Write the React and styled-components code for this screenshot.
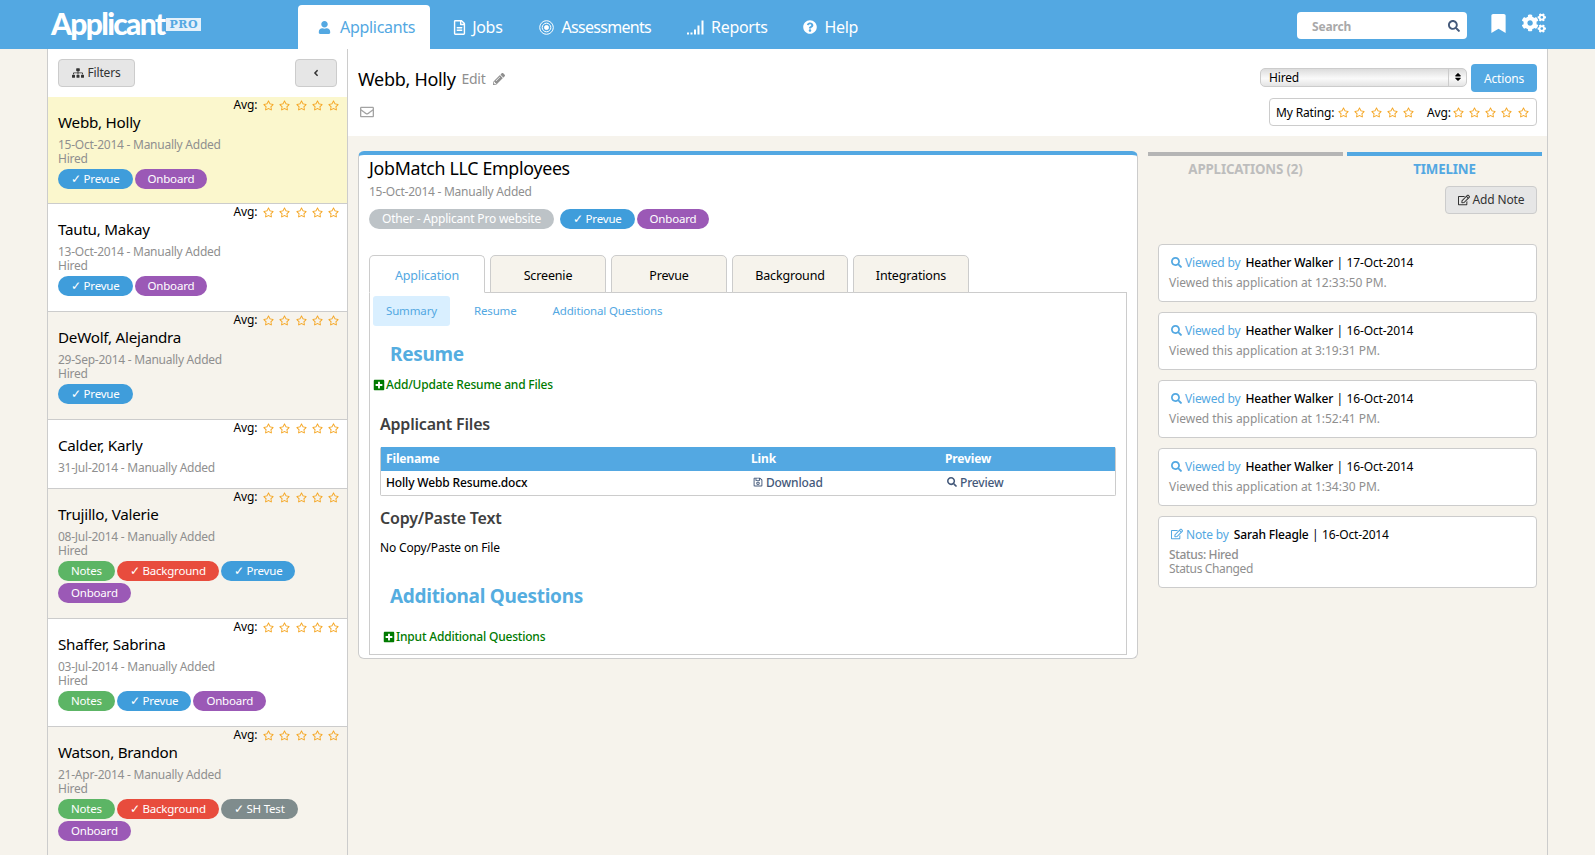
import styled, { createGlobalStyle } from 'styled-components';
import {
  FaUser, FaRegFileAlt, FaQuestionCircle, FaSearch, FaBookmark, FaCogs, FaSitemap, FaAngleLeft,
  FaRegEnvelope, FaPencilAlt, FaRegStar, FaRegEdit, FaPlusSquare, FaRegSave, FaSort,
} from 'react-icons/fa';

const blue = '#53a8e2';
const cream = '#f6f3ec';
const line = '#cccccc';
const grey = '#8f8f8f';

const GlobalStyle = createGlobalStyle`
  html, body {
    margin: 0;
    height: 100%;
    overflow: hidden;
    background: ${cream};
    font-family: "Noto Sans", "Open Sans", sans-serif;
    font-size: 12px;
    letter-spacing: -0.15px;
    color: #000;
  }
  * { box-sizing: border-box; }
`;

const Header = styled.header`
  height: 49px;
  background: ${blue};
  display: flex;
  align-items: flex-end;
  padding-left: 51px;
  color: #fff;
`;

const Logo = styled.div`
  width: 247px;
  height: 49px;
  display: flex;
  align-items: center;
  font-family: "Lato", sans-serif;
  font-weight: 900;
  font-size: 30px;
  letter-spacing: -1.7px;
  padding-bottom: 3px;
`;

const ProBadge = styled.span`
  background: #e4f1fb;
  color: ${blue};
  font-family: "DejaVu Serif", serif;
  font-size: 11px;
  font-weight: 700;
  letter-spacing: 0.6px;
  line-height: 13px;
  padding: 0 3px;
  margin-left: 2px;
  margin-top: 2px;
`;

const NavTab = styled.a`
  height: ${(p) => (p.$active ? '44px' : '49px')};
  padding: ${(p) => (p.$active ? '0 15px 0 20px' : '0')};
  margin-right: ${(p) => p.$gap}px;
  display: flex;
  align-items: center;
  gap: ${(p) => p.$iconGap}px;
  font-size: 16px;
  letter-spacing: ${(p) => (p.$tight ? '-0.7px' : '-0.3px')};
  background: ${(p) => (p.$active ? '#fff' : 'transparent')};
  color: ${(p) => (p.$active ? blue : '#fff')};
  border-radius: 4px 4px 0 0;
  padding-top: ${(p) => (p.$active ? '0' : '5px')};
`;

const HeaderRight = styled.div`
  margin-left: auto;
  height: 49px;
  display: flex;
  align-items: center;
  padding-right: 49px;
  padding-bottom: 3px;
`;

const SearchBox = styled.div`
  width: 170px;
  height: 27px;
  margin-top: 5px;
  background: #fff;
  border-radius: 4px;
  display: flex;
  align-items: center;
  justify-content: space-between;
  padding: 1px 7px 0 15px;
  color: #a9a9a9;
  font-weight: 700;
  font-size: 12px;
  margin-right: 22px;
  svg { color: #44597a; }
`;

const Shell = styled.div`
  margin: 0 47px;
  height: 806px;
  display: flex;
  border-left: 1px solid ${line};
  border-right: 1px solid ${line};
  overflow: hidden;
`;

const Sidebar = styled.aside`
  width: 300px;
  flex: none;
  border-right: 1px solid ${line};
  background: #fff;
  display: flex;
  flex-direction: column;
`;

const SidebarTop = styled.div`
  height: 48px;
  flex: none;
  padding: 10px 10px 0 10px;
  display: flex;
  justify-content: space-between;
`;

const GreyButton = styled.button`
  height: 28px;
  width: ${(p) => p.$width}px;
  font: inherit;
  letter-spacing: inherit;
  line-height: 24px;
  color: #333;
  background: #e6e6e6;
  border: 1px solid ${line};
  border-radius: 4px;
  display: flex;
  align-items: center;
  justify-content: center;
  gap: 3px;
  padding: 0 0 1px;
`;

const Item = styled.div`
  height: ${(p) => p.$height}px;
  flex: ${(p) => (p.$last ? '1' : 'none')};
  background: ${(p) => p.$bg};
  border-bottom: ${(p) => (p.$last ? '0' : `1px solid ${line}`)};
  padding: 0 10px;
  position: relative;
`;

const AvgRow = styled.div`
  position: absolute;
  top: 1px;
  right: 8px;
  display: flex;
  align-items: center;
  gap: 6px;
  line-height: 14px;
`;

const Stars = styled.span`
  display: inline-flex;
  gap: 5.2px;
  color: #f5a623;
  font-size: 11px;
`;

const ItemName = styled.div`
  font-size: 15.2px;
  line-height: 20px;
  padding-top: 15px;
  letter-spacing: -0.25px;
`;

const Meta = styled.div`
  color: ${grey};
  line-height: 14px;
  letter-spacing: -0.25px;
  margin-top: ${(p) => p.$top || 0}px;
`;

const PillRow = styled.div`
  display: flex;
  flex-wrap: wrap;
  gap: 2px;
  margin-top: ${(p) => p.$top}px;
`;

const Pill = styled.span`
  height: 20px;
  padding: 0 13px;
  border-radius: 10px;
  background: ${(p) => p.$color};
  color: #fff;
  font-size: ${(p) => p.$size || 11.5}px;
  line-height: 20px;
  letter-spacing: -0.2px;
  white-space: nowrap;
`;

const Main = styled.main`
  flex: 1;
  min-width: 0;
`;

const ProfileBar = styled.div`
  height: 87px;
  background: #fff;
  padding: 10px 10px 0 10px;
  display: flex;
  justify-content: space-between;
`;

const NameBlock = styled.div`
  padding-top: 8px;
`;

const ProfileName = styled.div`
  display: flex;
  align-items: center;
  font-size: 18px;
  line-height: 24px;
  letter-spacing: -0.3px;
`;

const EditLink = styled.span`
  color: ${grey};
  font-size: 14px;
  margin-left: 6px;
  margin-right: 8px;
`;

const MailRow = styled.div`
  color: #a3a3a3;
  font-size: 14px;
  padding: 13px 0 0 2px;
`;

const ProfileTools = styled.div`
  display: flex;
  flex-direction: column;
  align-items: flex-end;
  gap: 6px;
  margin-top: 5px;
`;

const ToolRow = styled.div`
  display: flex;
  align-items: center;
  gap: 4px;
`;

const FakeSelect = styled.div`
  width: 207px;
  height: 19px;
  margin-top: -2px;
  border: 1px solid ${line};
  border-radius: 5px;
  background: linear-gradient(#dcdcdc, #fafafa 55%, #e4e4e4);
  display: flex;
  align-items: center;
  justify-content: space-between;
  padding-left: 8px;
  line-height: 17px;
`;

const SelectArrow = styled.span`
  width: 18px;
  height: 17px;
  border-left: 1px solid ${line};
  display: flex;
  align-items: center;
  justify-content: center;
  font-size: 10px;
`;

const ActionButton = styled.button`
  width: 66px;
  height: 28px;
  background: ${blue};
  color: #fff;
  border: 0;
  border-radius: 4px;
  font: inherit;
  letter-spacing: inherit;
  padding: 0;
`;

const RatingBox = styled.div`
  width: 268px;
  height: 28px;
  border: 1px solid ${line};
  border-radius: 4px;
  display: flex;
  align-items: center;
  padding: 0 6px;
  gap: 4px;
  white-space: nowrap;
`;

const AvgLabel = styled.span`
  margin-left: 9px;
  margin-right: -2px;
`;

const Columns = styled.div`
  display: flex;
  padding: 15px 5px 0 10px;
`;

const LeftColumn = styled.div`
  width: 780px;
  flex: none;
  height: 508px;
  background: #fff;
  border: 1px solid ${line};
  border-top: 4px solid ${blue};
  border-radius: 6px;
  padding: 1px 10px 3px 10px;
  display: flex;
  flex-direction: column;
`;

const PanelTitle = styled.div`
  font-size: 17.8px;
  line-height: 24px;
  letter-spacing: -0.3px;
`;

const PanelMeta = styled.div`
  color: ${grey};
  line-height: 16px;
  letter-spacing: -0.25px;
  margin-top: 4px;
`;

const PanelPills = styled.div`
  display: flex;
  gap: 6px;
  margin-top: 9px;
  margin-bottom: 26px;
  span + span + span { margin-left: -4px; }
`;

const TabRow = styled.div`
  display: flex;
  gap: 5px;
  position: relative;
  z-index: 1;
  margin-bottom: -1px;
`;

const Tab = styled.div`
  width: 116px;
  height: 38px;
  padding-top: 2px;
  display: flex;
  align-items: center;
  justify-content: center;
  font-size: 12.5px;
  background: ${(p) => (p.$active ? '#fff' : cream)};
  color: ${(p) => (p.$active ? blue : '#000')};
  border: 1px solid ${line};
  border-bottom-color: ${(p) => (p.$active ? '#fff' : line)};
  border-radius: 5px 5px 0 0;
`;

const TabBody = styled.div`
  flex: 1;
  border: 1px solid ${line};
  padding: 3px 3px 0 3px;
`;

const SubTabs = styled.div`
  display: flex;
  color: ${blue};
  font-size: 11.5px;
`;

const SubTab = styled.div`
  height: 30px;
  padding: 0 13px 2px;
  margin-right: ${(p) => p.$gap}px;
  display: flex;
  align-items: center;
  background: ${(p) => (p.$active ? '#d9efff' : 'transparent')};
  border-radius: 3px;
`;

const SectionTitle = styled.h2`
  margin: ${(p) => p.$top}px 0 0 17px;
  font-size: 19px;
  line-height: 28px;
  font-weight: 700;
  color: #55ade0;
  letter-spacing: -0.3px;
`;

const AddLink = styled.div`
  display: flex;
  align-items: center;
  gap: 1px;
  color: #007a00;
  line-height: 16px;
  letter-spacing: -0.2px;
  margin: ${(p) => p.$top}px 0 0 ${(p) => p.$left}px;
  font-weight: 500;
`;

const SubHeading = styled.h3`
  margin: ${(p) => p.$top}px 0 0 7px;
  font-size: 16px;
  line-height: 22px;
  font-weight: 600;
  color: #3f3f3f;
  letter-spacing: -0.2px;
`;

const FileTable = styled.div`
  margin: 12px 7px 0 7px;
  border: 1px solid ${line};
  border-top: 0;
  border-radius: 2px;
`;

const FileRow = styled.div`
  height: ${(p) => p.$height}px;
  display: grid;
  grid-template-columns: 365px 194px 1fr;
  align-items: center;
  padding: 0 0 2px 5px;
  font-weight: ${(p) => (p.$head ? 700 : 500)};
  background: ${(p) => (p.$head ? blue : '#fff')};
  color: ${(p) => (p.$head ? '#fff' : '#000')};
`;

const FileAction = styled.span`
  display: inline-flex;
  align-items: center;
  gap: 3px;
  color: #44597a;
  padding-left: ${(p) => p.$pad || 0}px;
`;

const PlainText = styled.div`
  margin: 11px 0 0 7px;
  line-height: 16px;
`;

const RightColumn = styled.div`
  flex: 1;
  padding-left: 10px;
  display: flex;
  flex-direction: column;
`;

const SideTabs = styled.div`
  display: flex;
  gap: 4px;
  margin-top: 1px;
`;

const SideTab = styled.div`
  flex: 1;
  border-top: 4px solid ${(p) => (p.$active ? blue : '#b5b5b5')};
  color: ${(p) => (p.$active ? blue : '#bdbdbd')};
  font-weight: 700;
  font-size: 13.3px;
  text-align: center;
  line-height: 20px;
  padding-top: 3px;
`;

const NoteButtonRow = styled.div`
  display: flex;
  justify-content: flex-end;
  margin: 7px 5px 0 0;
`;

const Timeline = styled.div`
  display: flex;
  flex-direction: column;
  gap: 10px;
  margin: 30px 5px 0 10px;
`;

const Card = styled.div`
  height: ${(p) => p.$height}px;
  background: #fff;
  border: 1px solid ${line};
  border-radius: 4px;
  padding: 9px 10px 0 10px;
`;

const CardTitle = styled.div`
  display: flex;
  align-items: center;
  height: 16px;
  padding-left: 2px;
`;

const CardLead = styled.span`
  color: ${blue};
  display: inline-flex;
  align-items: center;
  gap: 3px;
  margin-right: 5px;
`;

const CardName = styled.span`
  font-weight: 500;
`;

const CardSep = styled.span`
  margin: 0 3.5px;
`;

const CardLines = styled.div`
  color: ${grey};
  line-height: 14px;
  margin-top: 6px;
  letter-spacing: ${(p) => (p.$wide ? '-0.03px' : '-0.35px')};
`;

const CardStatus = styled.div`
  font-weight: 500;
`;

const IconGap = styled.span`
  display: inline-flex;
  font-size: ${(p) => p.$size}px;
  margin-left: ${(p) => p.$left || 0}px;
`;

const colors = {
  Notes: '#5cb565',
  Background: '#e84c3d',
  Prevue: '#3f9ddb',
  Onboard: '#9b59b6',
  'SH Test': '#7f8c8d',
};

const applicants = [
  { name: 'Webb, Holly', date: '15-Oct-2014', hired: true, height: 107, bg: '#fbf7cd', pills: ['Prevue*', 'Onboard'] },
  { name: 'Tautu, Makay', date: '13-Oct-2014', hired: true, height: 108, bg: '#fff', pills: ['Prevue*', 'Onboard'] },
  { name: 'DeWolf, Alejandra', date: '29-Sep-2014', hired: true, height: 108, bg: cream, pills: ['Prevue*'] },
  { name: 'Calder, Karly', date: '31-Jul-2014', hired: false, height: 69, bg: '#fff', pills: [] },
  { name: 'Trujillo, Valerie', date: '08-Jul-2014', hired: true, height: 130, bg: cream, pills: ['Notes', 'Background*', 'Prevue*', 'Onboard'] },
  { name: 'Shaffer, Sabrina', date: '03-Jul-2014', hired: true, height: 108, bg: '#fff', pills: ['Notes', 'Prevue*', 'Onboard'] },
  { name: 'Watson, Brandon', date: '21-Apr-2014', hired: true, height: 130, bg: cream, pills: ['Notes', 'Background*', 'SH Test*', 'Onboard'] },
];

const views = [
  { date: '17-Oct-2014', time: '12:33:50 PM' },
  { date: '16-Oct-2014', time: '3:19:31 PM' },
  { date: '16-Oct-2014', time: '1:52:41 PM' },
  { date: '16-Oct-2014', time: '1:34:30 PM' },
];

const FiveStars = () => (
  <Stars>
    {[0, 1, 2, 3, 4].map((i) => <FaRegStar key={i} />)}
  </Stars>
);

const Tag = ({ label }) => {
  const checked = label.endsWith('*');
  const text = checked ? label.slice(0, -1) : label;
  return <Pill $color={colors[text]}>{checked ? `✓ ${text}` : text}</Pill>;
};

const TargetIcon = () => (
  <svg width="15" height="15" viewBox="0 0 15 15" fill="none" stroke="currentColor">
    <circle cx="7.5" cy="7.5" r="6.8" strokeWidth="1" />
    <circle cx="7.5" cy="7.5" r="4.3" strokeWidth="1" />
    <circle cx="7.5" cy="7.5" r="2" fill="currentColor" />
  </svg>
);

const BarsIcon = () => (
  <svg width="17" height="15" viewBox="0 0 17 15" fill="currentColor">
    <rect x="0" y="12.5" width="2" height="2" />
    <rect x="3.5" y="12.5" width="2" height="2" />
    <rect x="7" y="9.5" width="2" height="5" />
    <rect x="10.5" y="5.5" width="2" height="9" />
    <rect x="14.5" y="0.5" width="2" height="14" />
  </svg>
);

export default function App() {
  return (
    <>
      <GlobalStyle />
      <Header>
        <Logo>Applicant<ProBadge>PRO</ProBadge></Logo>
        <NavTab $active $gap={22} $iconGap={9}><FaUser size={13} />Applicants</NavTab>
        <NavTab $gap={36} $iconGap={5}><FaRegFileAlt size={15} />Jobs</NavTab>
        <NavTab $tight $gap={36} $iconGap={8}><TargetIcon />Assessments</NavTab>
        <NavTab $gap={35} $iconGap={7}><BarsIcon />Reports</NavTab>
        <NavTab $gap={0} $iconGap={8}><FaQuestionCircle size={14} />Help</NavTab>
        <HeaderRight>
          <SearchBox>Search<FaSearch size={12} /></SearchBox>
          <IconGap $size={19}><FaBookmark /></IconGap>
          <IconGap $size={24} $left={14}><FaCogs /></IconGap>
        </HeaderRight>
      </Header>
      <Shell>
        <Sidebar>
          <SidebarTop>
            <GreyButton $width={77}><FaSitemap size={12} />Filters</GreyButton>
            <GreyButton $width={42}><FaAngleLeft size={10} /></GreyButton>
          </SidebarTop>
          {applicants.map((a, i) => (
            <Item key={a.name} $height={a.height} $bg={a.bg} $last={i === applicants.length - 1}>
              <AvgRow>Avg: <FiveStars /></AvgRow>
              <ItemName>{a.name}</ItemName>
              <Meta $top={6}>{a.date} - Manually Added</Meta>
              {a.hired && <Meta>Hired</Meta>}
              {a.pills.length > 0 && (
                <PillRow $top={3}>
                  {a.pills.map((p) => <Tag key={p} label={p} />)}
                </PillRow>
              )}
            </Item>
          ))}
        </Sidebar>
        <Main>
          <ProfileBar>
            <NameBlock>
              <ProfileName>
                Webb, Holly<EditLink>Edit</EditLink><IconGap $size={12}><FaPencilAlt color="#8f8f8f" /></IconGap>
              </ProfileName>
              <MailRow><FaRegEnvelope /></MailRow>
            </NameBlock>
            <ProfileTools>
              <ToolRow>
                <FakeSelect>Hired<SelectArrow><FaSort /></SelectArrow></FakeSelect>
                <ActionButton>Actions</ActionButton>
              </ToolRow>
              <RatingBox>
                My Rating: <FiveStars />
                <AvgLabel>Avg:</AvgLabel> <FiveStars />
              </RatingBox>
            </ProfileTools>
          </ProfileBar>
          <Columns>
            <LeftColumn>
              <PanelTitle>JobMatch LLC Employees</PanelTitle>
              <PanelMeta>15-Oct-2014 - Manually Added</PanelMeta>
              <PanelPills>
                <Pill $color="#bdc3c7" $size={12}>Other - Applicant Pro website</Pill>
                <Pill $color={colors.Prevue}>✓ Prevue</Pill>
                <Pill $color={colors.Onboard}>Onboard</Pill>
              </PanelPills>
              <TabRow>
                <Tab $active>Application</Tab>
                <Tab>Screenie</Tab>
                <Tab>Prevue</Tab>
                <Tab>Background</Tab>
                <Tab>Integrations</Tab>
              </TabRow>
              <TabBody>
                <SubTabs>
                  <SubTab $active $gap={11}>Summary</SubTab>
                  <SubTab $gap={10}>Resume</SubTab>
                  <SubTab>Additional Questions</SubTab>
                </SubTabs>
                <SectionTitle $top={14}>Resume</SectionTitle>
                <AddLink $top={9} $left={0}><FaPlusSquare size={12} />Add/Update Resume and Files</AddLink>
                <SubHeading $top={20}>Applicant Files</SubHeading>
                <FileTable>
                  <FileRow $head $height={24}>
                    <span>Filename</span><span>Link</span><span>Preview</span>
                  </FileRow>
                  <FileRow $height={24}>
                    <span>Holly Webb Resume.docx</span>
                    <FileAction $pad={2}><FaRegSave size={10} />Download</FileAction>
                    <FileAction $pad={2}><FaSearch size={10} />Preview</FileAction>
                  </FileRow>
                </FileTable>
                <SubHeading $top={11}>Copy/Paste Text</SubHeading>
                <PlainText>No Copy/Paste on File</PlainText>
                <SectionTitle $top={26}>Additional Questions</SectionTitle>
                <AddLink $top={19} $left={10}><FaPlusSquare size={12} />Input Additional Questions</AddLink>
              </TabBody>
            </LeftColumn>
            <RightColumn>
              <SideTabs>
                <SideTab>APPLICATIONS (2)</SideTab>
                <SideTab $active>TIMELINE</SideTab>
              </SideTabs>
              <NoteButtonRow>
                <GreyButton $width={92}><FaRegEdit size={12} />Add Note</GreyButton>
              </NoteButtonRow>
              <Timeline>
                {views.map((v) => (
                  <Card key={v.time} $height={58}>
                    <CardTitle>
                      <CardLead><FaSearch size={11} />Viewed by</CardLead>
                      <CardName>Heather Walker</CardName><CardSep>|</CardSep>{v.date}
                    </CardTitle>
                    <CardLines $wide>Viewed this application at {v.time}.</CardLines>
                  </Card>
                ))}
                <Card $height={72}>
                  <CardTitle>
                    <CardLead><FaRegEdit size={12} />Note by</CardLead>
                    <CardName>Sarah Fleagle</CardName><CardSep>|</CardSep>16-Oct-2014
                  </CardTitle>
                  <CardLines>
                    <CardStatus>Status: Hired</CardStatus>
                    Status Changed
                  </CardLines>
                </Card>
              </Timeline>
            </RightColumn>
          </Columns>
        </Main>
      </Shell>
    </>
  );
}
